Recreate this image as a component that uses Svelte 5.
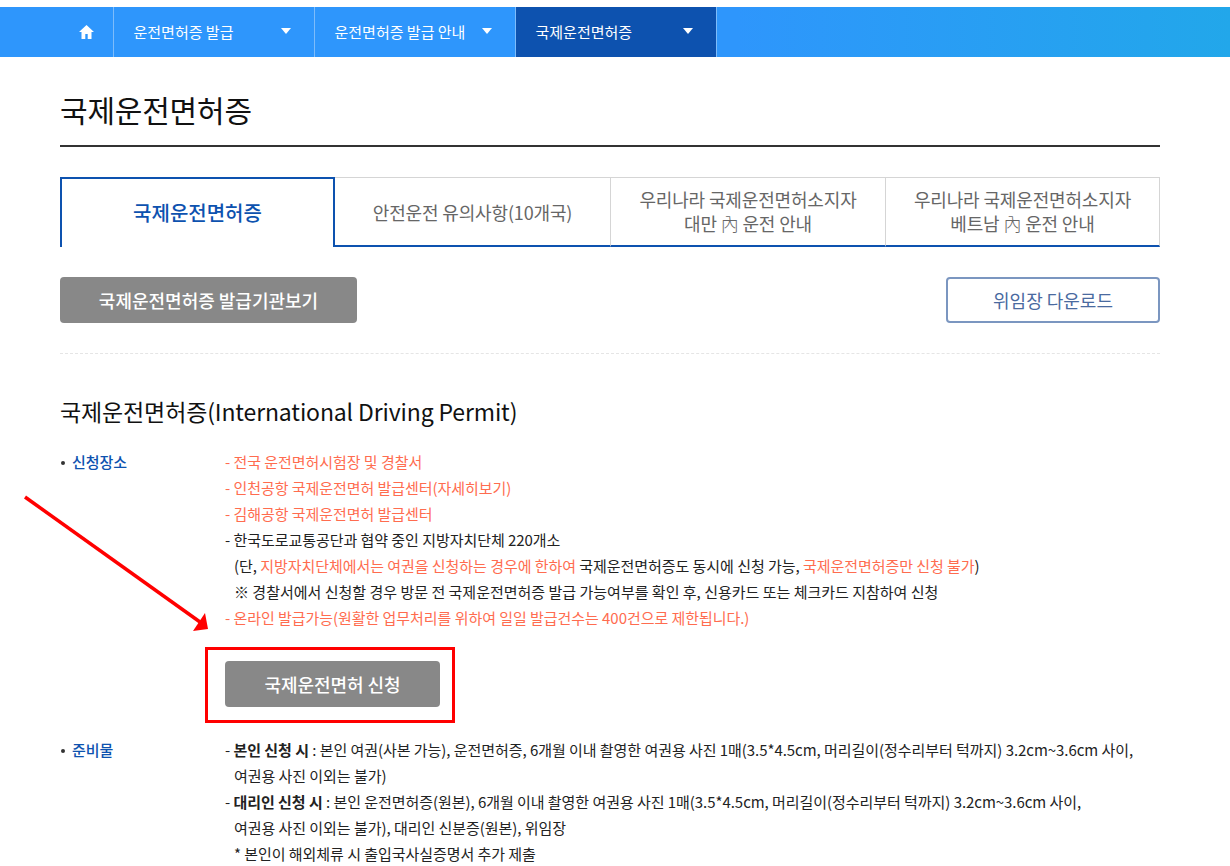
<script>
  const menu = [
    { label: '운전면허증 발급' },
    { label: '운전면허증 발급 안내' },
    { label: '국제운전면허증', active: true }
  ];

  const tabs = [
    { lines: ['국제운전면허증'], active: true },
    { lines: ['안전운전 유의사항(10개국)'] },
    { lines: ['우리나라 국제운전면허소지자'], place: '대만' },
    { lines: ['우리나라 국제운전면허소지자'], place: '베트남' }
  ];
</script>

<div class="page">
  <nav class="gnb">
    <a class="home" href="#home" aria-label="홈">
      <svg viewBox="0 0 16 16" width="16" height="16">
        <path d="M7.5 1 0 8H2.5V15H6.3V10H8.7V15H12.5V8H15z" fill="#fff" />
      </svg>
    </a>
    {#each menu as item}
      <a class="menu" class:on={item.active} href="#menu">
        <span>{item.label}</span>
        <i class="caret"></i>
      </a>
    {/each}
  </nav>

  <main class="wrap">
    <h1>국제운전면허증</h1>

    <ul class="tabs">
      {#each tabs as tab}
        <li class:active={tab.active}>
          {#each tab.lines as line}
            <span>{line}</span>
          {/each}
          {#if tab.place}
            <span>{tab.place} <em>內</em> 운전 안내</span>
          {/if}
        </li>
      {/each}
    </ul>

    <div class="actions">
      <a class="btn gray wide" href="#org">국제운전면허증 발급기관보기</a>
      <a class="btn outline" href="#down">위임장 다운로드</a>
    </div>

    <h2>국제운전면허증(International Driving Permit)</h2>

    <div class="info">
      <div class="label">신청장소</div>
      <div class="body">
        <p class="red">- 전국 운전면허시험장 및 경찰서</p>
        <p class="red">- 인천공항 국제운전면허 발급센터(자세히보기)</p>
        <p class="red">- 김해공항 국제운전면허 발급센터</p>
        <p>- 한국도로교통공단과 협약 중인 지방자치단체 220개소</p>
        <p class="in">(단, <span class="red">지방자치단체에서는 여권을 신청하는 경우에 한하여</span> 국제운전면허증도 동시에 신청 가능, <span class="red">국제운전면허증만 신청 불가</span>)</p>
        <p class="in note">※ 경찰서에서 신청할 경우 방문 전 국제운전면허증 발급 가능여부를 확인 후, 신용카드 또는 체크카드 지참하여 신청</p>
        <p class="red">- 온라인 발급가능(원활한 업무처리를 위하여 일일 발급건수는 400건으로 제한됩니다.)</p>
        <div class="apply">
          <a class="btn gray small" href="#apply">국제운전면허 신청</a>
        </div>
      </div>

      <div class="label">준비물</div>
      <div class="body">
        <p>- <b>본인 신청 시</b> : 본인 여권(사본 가능), 운전면허증, 6개월 이내 촬영한 여권용 사진 1매(3.5*4.5cm, 머리길이(정수리부터 턱까지) 3.2cm~3.6cm 사이,</p>
        <p class="in">여권용 사진 이외는 불가)</p>
        <p>- <b>대리인 신청 시</b> : 본인 운전면허증(원본), 6개월 이내 촬영한 여권용 사진 1매(3.5*4.5cm, 머리길이(정수리부터 턱까지) 3.2cm~3.6cm 사이,</p>
        <p class="in">여권용 사진 이외는 불가), 대리인 신분증(원본), 위임장</p>
        <p class="in">* 본인이 해외체류 시 출입국사실증명서 추가 제출</p>
      </div>
    </div>
  </main>

  <!-- annotation drawn over the page -->
  <svg class="arrow" width="230" height="150" viewBox="0 0 230 150">
    <line x1="25" y1="7" x2="200" y2="132" stroke="#f00" stroke-width="3.5" />
    <path d="M208 139 193 141 205 123z" fill="#f00" />
  </svg>
</div>

<style>
  :global(body) {
    margin: 0;
    background: #fff;
  }

  .page {
    position: relative;
    height: 866px;
    padding-top: 7px;
    box-sizing: border-box;
    overflow: hidden;
    font-family: "Noto Sans CJK KR", "Noto Sans", sans-serif;
    color: #222;
    font-size: 15px;
  }

  a {
    text-decoration: none;
  }

  .gnb {
    display: flex;
    height: 50px;
    padding-left: 60px;
    background: linear-gradient(90deg, #2e96fc 0, #2e96fc 60%, #22a7ea 100%);
  }

  .home {
    display: flex;
    align-items: center;
    justify-content: center;
    width: 54px;
    border-right: 1px solid #7dbcfb;
    box-sizing: border-box;
  }

  .menu {
    display: flex;
    align-items: center;
    justify-content: space-between;
    width: 201px;
    padding: 0 21px 2px 19.5px;
    box-sizing: border-box;
    border-right: 1px solid #7dbcfb;
    color: #fff;
    font-size: 15px;
  }

  .menu.on {
    background: #0d52af;
  }

  .caret {
    width: 0;
    height: 0;
    margin-right: 2px;
    border-left: 5px solid transparent;
    border-right: 5px solid transparent;
    border-top: 6px solid #fff;
  }

  .wrap {
    width: 1100px;
    margin-left: 60px;
  }

  h1 {
    margin: 0;
    height: 90px;
    padding-top: 29px;
    box-sizing: border-box;
    border-bottom: 2px solid #333;
    font-size: 30px;
    font-weight: 400;
    line-height: 46px;
    color: #111;
    letter-spacing: -0.2px;
  }

  .tabs {
    display: grid;
    grid-template-columns: 275px 276px 275px 274px;
    height: 70px;
    margin: 30px 0 0;
    padding: 0;
    list-style: none;
  }

  .tabs li {
    display: flex;
    flex-direction: column;
    align-items: center;
    justify-content: center;
    padding-bottom: 2px;
    box-sizing: border-box;
    border-top: 1px solid #d5d5d5;
    border-right: 1px solid #d5d5d5;
    border-bottom: 2px solid #0d52af;
    color: #666;
    font-size: 18px;
    line-height: 24px;
    letter-spacing: -0.15px;
  }

  .tabs li:nth-child(2) {
    padding-bottom: 0;
  }

  .tabs li.active {
    padding-bottom: 0;
    border: 2px solid #0d52af;
    border-bottom: 0;
    color: #0d52af;
    font-weight: 500;
    font-size: 20px;
    letter-spacing: 0;
  }

  em {
    font-style: normal;
    font-weight: 200;
    font-family: "Noto Sans CJK TC", sans-serif;
  }

  .actions {
    display: flex;
    justify-content: space-between;
    padding: 30px 0;
    border-bottom: 1px dashed #e5e5e5;
  }

  .btn {
    display: flex;
    align-items: center;
    justify-content: center;
    height: 46px;
    box-sizing: border-box;
    border-radius: 4px;
    font-size: 18px;
  }

  .gray {
    background: #888;
    color: #fff;
    font-weight: 500;
  }

  .wide {
    width: 297px;
  }

  .outline {
    width: 214px;
    border: 2px solid #7b96c0;
    color: #4a6a9f;
  }

  .small {
    width: 215px;
  }

  h2 {
    margin: 39px 0 0;
    font-size: 23px;
    font-weight: 400;
    line-height: 36px;
    color: #111;
    letter-spacing: -0.13px;
  }

  .info {
    display: grid;
    grid-template-columns: 165px 1fr;
    margin-top: 20px;
    line-height: 26px;
    letter-spacing: -0.05px;
  }

  .label {
    position: relative;
    padding-left: 12px;
    color: #0d52af;
    font-weight: 500;
  }

  .label::before {
    content: '';
    position: absolute;
    left: 1px;
    top: 12px;
    width: 4px;
    height: 4px;
    border-radius: 50%;
    background: #333;
  }

  p {
    margin: 0;
    white-space: nowrap;
  }

  .in {
    padding-left: 9px;
  }

  .note {
    letter-spacing: 0;
  }

  .red {
    color: #ff6c4f;
  }

  b {
    font-weight: 700;
  }

  .apply {
    width: 250px;
    height: 76px;
    margin: 16px 0 14px -20px;
    padding: 11px 17px;
    box-sizing: border-box;
    border: 3px solid #f00;
  }

  .arrow {
    position: absolute;
    left: 0;
    top: 490px;
  }
</style>
